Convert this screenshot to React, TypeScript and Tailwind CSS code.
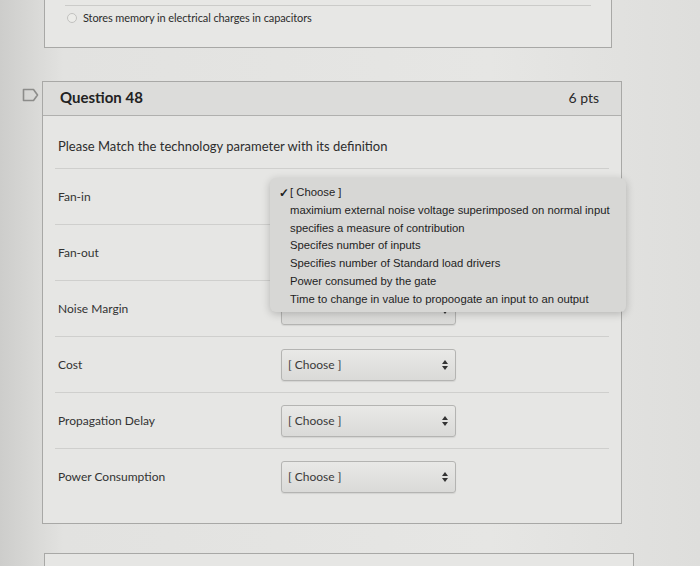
import React from 'react'

const rows = ['Fan-in', 'Fan-out', 'Noise Margin', 'Cost', 'Propagation Delay', 'Power Consumption']

const options = [
  'maximium external noise voltage superimposed on normal input',
  'specifies a measure of contribution',
  'Specifes number of inputs',
  'Specifies number of Standard load drivers',
  'Power consumed by the gate',
  'Time to change in value to propoogate an input to an output',
]

// rows whose select sits under the open menu
const covered = 3

function SelectBox({ hidden }: { hidden?: boolean }) {
  return (
    <div className="w-[175px] h-[32px] flex items-center justify-between pl-[6px] pr-[7px] rounded-[3px] border border-[#b4b4b2] bg-[linear-gradient(#e9e9e7,#dadad8)] shadow-[0_1px_1px_rgba(0,0,0,0.08)]">
      <span className={'text-[12px] text-[#3a3a3a] ' + (hidden ? 'invisible' : '')}>[ Choose ]</span>
      <svg width="6" height="10" viewBox="0 0 6 10">
        <path d="M3 0 L6 4 H0 Z" fill="#333" />
        <path d="M3 10 L6 6 H0 Z" fill="#333" />
      </svg>
    </div>
  )
}

function Flag() {
  return (
    <svg width="17" height="14" viewBox="0 0 17 14" className="mt-[7px] ml-[22px]">
      <path d="M1.5 1.5 H11.5 L15.5 7 L11.5 12.5 H1.5 Z" fill="none" stroke="#8c8c8a" strokeWidth="1.6" strokeLinejoin="round" />
    </svg>
  )
}

export default function App() {
  return (
    <div className="relative w-[700px] h-[566px] overflow-hidden bg-[linear-gradient(to_right,#cdcdcb,#e2e2e0_9%,#e6e6e4_70%,#dededc)] font-['Lato','Open_Sans',sans-serif] text-[#2d2d2d]">
      {/* previous question card */}
      <div className="ml-[44px] w-[568px] h-[48px] border border-t-0 border-[#a8a8a6] bg-[#e7e7e5] px-[20px]">
        <div className="h-[6px] border-b border-[#cbcbc9]" />
        <div className="flex items-center gap-[6px] mt-[4px] pl-[2px]">
          <span className="w-[10px] h-[10px] rounded-full border border-[#c2c2c0] bg-[#ecece9]" />
          <span className="text-[11px] tracking-[-0.1px]">Stores memory in electrical charges in capacitors</span>
        </div>
      </div>

      {/* question 48 */}
      <div className="flex mt-[33px]">
        <div className="w-[42px] shrink-0">
          <Flag />
        </div>
        <div className="w-[580px] border border-[#a8a8a6] bg-[#e6e6e4]">
          <div className="h-[34px] flex items-center justify-between pl-[17px] pr-[22px] bg-[#dcdcda] border-b border-[#b0b0ae]">
            <span className="text-[15px] font-bold text-[#222] -mt-[2px]">Question 48</span>
            <span className="text-[14px] text-[#2a2a2a] -mt-[2px]">6 pts</span>
          </div>
          <div className="px-[12px] pb-[18px]">
            <div className="pt-[21px] pb-[13px] px-[3px] border-b border-[#cfcfcd] text-[13px] leading-[18px]">
              Please Match the technology parameter with its definition
            </div>
            {rows.map((r, i) => (
              <div
                key={r}
                className={
                  'h-[56px] flex items-center px-[3px] ' +
                  (i < rows.length - 1 ? 'border-b border-[#cfcfcd]' : '')
                }
              >
                <span className="w-[223px] text-[12px] text-[#333]">{r}</span>
                <SelectBox hidden={i < covered} />
              </div>
            ))}
          </div>
        </div>
      </div>

      {/* next question card */}
      <div className="ml-[44px] mt-[29px] w-[590px] h-[40px] border border-[#a8a8a6] bg-[#e6e6e4]" />

      {/* open dropdown menu */}
      <div className="absolute left-[270px] top-[178px] w-[356px] h-[134px] rounded-[6px] bg-[#d7d7d5] shadow-[0_2px_8px_rgba(0,0,0,0.22)] pt-[6px] font-['Liberation_Sans','Roboto',sans-serif] text-[11.3px] text-[#1e1e1e]">
        <div className="flex items-center h-[17.7px] pl-[9px]">
          <span className="w-[11px] text-[12px] font-bold">✓</span>
          <span>[ Choose ]</span>
        </div>
        {options.map(o => (
          <div key={o} className="flex items-center h-[17.7px] pl-[20px] whitespace-nowrap">
            {o}
          </div>
        ))}
      </div>
    </div>
  )
}
